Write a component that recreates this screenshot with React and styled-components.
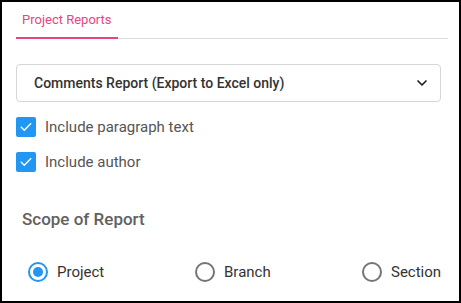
import styled, { createGlobalStyle } from "styled-components"

const GlobalStyle = createGlobalStyle`
  * { box-sizing: border-box; }
  body {
    margin: 0;
    font-family: Roboto, "Liberation Sans", sans-serif;
    background: #fff;
  }
`

const Frame = styled.div`
  width: 461px;
  height: 303px;
  border: 2px solid #000;
  padding: 0 11px 0 14px;
  display: flex;
  flex-direction: column;
`

const TabBar = styled.div`
  display: flex;
  height: 37px;
  border-bottom: 1px solid #dcdcdc;
`

const Tab = styled.div`
  display: flex;
  align-items: center;
  padding: 0 7px 0 6px;
  font-size: 13px;
  color: #e8457c;
  border-bottom: 2px solid #e8457c;
  margin-bottom: -1px;
`

const Select = styled.div`
  margin: 25px 7px 0 0;
  height: 38px;
  border: 1px solid #d6d6d6;
  border-radius: 4px;
  display: flex;
  align-items: center;
  justify-content: space-between;
  padding: 0 12px 0 17px;
  font-size: 14px;
  font-weight: 500;
  color: #333;
`

const CheckRow = styled.label`
  display: flex;
  align-items: center;
  gap: 9px;
  margin-top: ${({ $top }) => $top}px;
  height: 20px;
  font-size: 15px;
  color: #555;
`

const Box = styled.span`
  width: 20px;
  height: 20px;
  border-radius: 2px;
  background: #2196f3;
  display: flex;
  align-items: center;
  justify-content: center;
`

const Heading = styled.div`
  margin: 37px 0 0 6px;
  font-size: 17px;
  font-weight: 500;
  color: #616161;
`

const RadioGroup = styled.div`
  display: grid;
  grid-template-columns: 167px 167px 1fr;
  margin: 33px 0 0 12px;
`

const RadioItem = styled.label`
  display: flex;
  align-items: center;
  gap: 9px;
  font-size: 15px;
  color: #333;
`

const Circle = styled.span`
  width: 20px;
  height: 20px;
  border-radius: 50%;
  border: 2px solid ${({ $on }) => ($on ? "#2196f3" : "#757575")};
  display: flex;
  align-items: center;
  justify-content: center;
  &::after {
    content: "";
    width: 10px;
    height: 10px;
    border-radius: 50%;
    background: ${({ $on }) => ($on ? "#2196f3" : "transparent")};
  }
`

const Check = () => (
  <svg width="14" height="14" viewBox="0 0 24 24" fill="none" stroke="#fff" strokeWidth="2.3" strokeLinecap="square">
    <path d="M4 12.5l5 5L20 6.5" />
  </svg>
)

const Chevron = () => (
  <svg width="12" height="12" viewBox="0 0 24 24" fill="none" stroke="#222" strokeWidth="3.4" strokeLinecap="round" strokeLinejoin="round">
    <path d="M4 8l8 8 8-8" />
  </svg>
)

const scopes = [
  { label: "Project", on: true },
  { label: "Branch", on: false },
  { label: "Section", on: false },
]

export default function App() {
  return (
    <>
      <GlobalStyle />
      <Frame>
        <TabBar>
          <Tab>Project Reports</Tab>
        </TabBar>
        <Select>
          <span>Comments Report (Export to Excel only)</span>
          <Chevron />
        </Select>
        <CheckRow $top={15}>
          <Box><Check /></Box>
          Include paragraph text
        </CheckRow>
        <CheckRow $top={15}>
          <Box><Check /></Box>
          Include author
        </CheckRow>
        <Heading>Scope of Report</Heading>
        <RadioGroup>
          {scopes.map((s) => (
            <RadioItem key={s.label}>
              <Circle $on={s.on} />
              {s.label}
            </RadioItem>
          ))}
        </RadioGroup>
      </Frame>
    </>
  )
}
